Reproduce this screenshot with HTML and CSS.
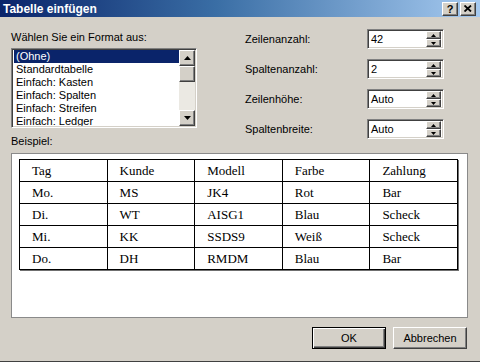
FILE: index.html
```html
<!DOCTYPE html>
<html lang="de">
  <head>
    <meta charset="UTF-8" />
    <meta name="viewport" content="width=device-width, initial-scale=1.0" />
    <title>Tabelle einfügen</title>
    <link rel="stylesheet" href="styles.css">
  </head>
  <body>
    <div class="dialog">
      <div class="titlebar">
        <span class="title">Tabelle einfügen</span>
        <div class="caption-btns">
          <div class="cap-btn help">?</div>
          <div class="cap-btn">
            <svg width="8" height="7" viewBox="0 0 8 7">
              <path d="M0.5 0.5 L7 6.5 M7 0.5 L0.5 6.5" stroke="#000" stroke-width="1.8" />
            </svg>
          </div>
        </div>
      </div>

      <div class="content">
        <div class="top">
          <div class="format">
            <div class="label">Wählen Sie ein Format aus:</div>
            <div class="listbox sunken">
              <ul class="items">
                <li class="selected">(Ohne)</li>
                <li>Standardtabelle</li>
                <li>Einfach: Kasten</li>
                <li>Einfach: Spalten</li>
                <li>Einfach: Streifen</li>
                <li>Einfach: Ledger</li>
              </ul>
              <div class="scrollbar">
                <div class="sb-btn raised">
                  <svg width="7" height="4" viewBox="0 0 7 4"><polygon points="3.5,0 7,4 0,4" fill="#000" /></svg>
                </div>
                <div class="sb-thumb raised"></div>
                <div class="sb-track"></div>
                <div class="sb-btn raised">
                  <svg width="7" height="4" viewBox="0 0 7 4"><polygon points="0,0 7,0 3.5,4" fill="#000" /></svg>
                </div>
              </div>
            </div>
            <div class="label example-label">Beispiel:</div>
          </div>

          <div class="fields">
            <span class="field-label">Zeilenanzahl:</span>
            <div class="spin sunken">
              <span class="spin-value">42</span>
              <div class="spin-btns">
                <div class="spin-btn raised"><svg width="5" height="3" viewBox="0 0 5 3"><polygon points="2.5,0 5,3 0,3" fill="#000" /></svg></div>
                <div class="spin-btn raised"><svg width="5" height="3" viewBox="0 0 5 3"><polygon points="0,0 5,0 2.5,3" fill="#000" /></svg></div>
              </div>
            </div>

            <span class="field-label">Spaltenanzahl:</span>
            <div class="spin sunken">
              <span class="spin-value">2</span>
              <div class="spin-btns">
                <div class="spin-btn raised"><svg width="5" height="3" viewBox="0 0 5 3"><polygon points="2.5,0 5,3 0,3" fill="#000" /></svg></div>
                <div class="spin-btn raised"><svg width="5" height="3" viewBox="0 0 5 3"><polygon points="0,0 5,0 2.5,3" fill="#000" /></svg></div>
              </div>
            </div>

            <span class="field-label">Zeilenhöhe:</span>
            <div class="spin sunken">
              <span class="spin-value">Auto</span>
              <div class="spin-btns">
                <div class="spin-btn raised"><svg width="5" height="3" viewBox="0 0 5 3"><polygon points="2.5,0 5,3 0,3" fill="#000" /></svg></div>
                <div class="spin-btn raised"><svg width="5" height="3" viewBox="0 0 5 3"><polygon points="0,0 5,0 2.5,3" fill="#000" /></svg></div>
              </div>
            </div>

            <span class="field-label">Spaltenbreite:</span>
            <div class="spin sunken">
              <span class="spin-value">Auto</span>
              <div class="spin-btns">
                <div class="spin-btn raised"><svg width="5" height="3" viewBox="0 0 5 3"><polygon points="2.5,0 5,3 0,3" fill="#000" /></svg></div>
                <div class="spin-btn raised"><svg width="5" height="3" viewBox="0 0 5 3"><polygon points="0,0 5,0 2.5,3" fill="#000" /></svg></div>
              </div>
            </div>
          </div>
        </div>

        <div class="preview">
          <table class="sample">
            <tr><td>Tag</td><td>Kunde</td><td>Modell</td><td>Farbe</td><td>Zahlung</td></tr>
            <tr><td>Mo.</td><td>MS</td><td>JK4</td><td>Rot</td><td>Bar</td></tr>
            <tr><td>Di.</td><td>WT</td><td>AISG1</td><td>Blau</td><td>Scheck</td></tr>
            <tr><td>Mi.</td><td>KK</td><td>SSDS9</td><td>Weiß</td><td>Scheck</td></tr>
            <tr><td>Do.</td><td>DH</td><td>RMDM</td><td>Blau</td><td>Bar</td></tr>
          </table>
        </div>

        <div class="footer">
          <div class="btn default">OK</div>
          <div class="btn raised">Abbrechen</div>
        </div>
      </div>
    </div>
  </body>
</html>
```

FILE: styles.css
```css
body {
  margin: 0;
  background-color: #d4d0c8;
  font-family: "Liberation Sans", Arial, sans-serif;
  font-size: 11px;
  color: #000;
}

.dialog {
  width: 480px;
  height: 362px;
  box-sizing: border-box;
  border-bottom: 1px solid #404040;
  overflow: hidden;
}

.titlebar {
  height: 17px;
  display: flex;
  align-items: center;
  justify-content: space-between;
  padding: 0 4px 0 3px;
  background: linear-gradient(to right, #0a246a 0%, #3a6ea5 45%, #a6caf0 100%);
}

.title {
  color: #fff;
  font-weight: bold;
  font-size: 12px;
}

.caption-btns {
  display: flex;
  gap: 2px;
}

.cap-btn {
  width: 14px;
  height: 12px;
  display: flex;
  align-items: center;
  justify-content: center;
  background-color: #d4d0c8;
  border: 1px solid;
  border-color: #fff #404040 #404040 #fff;
  box-shadow: inset -1px -1px #808080;
  font-weight: bold;
  font-size: 11px;
  line-height: 12px;
}

.raised {
  background-color: #d4d0c8;
  border: 1px solid;
  border-color: #fff #404040 #404040 #fff;
  box-shadow: inset -1px -1px #808080;
  box-sizing: border-box;
}

.sunken {
  background-color: #fff;
  border: 1px solid;
  border-color: #808080 #fff #fff #808080;
  box-shadow: inset 1px 1px #404040, inset -1px -1px #d4d0c8;
  box-sizing: border-box;
}

.content {
  padding: 0 12px 0 11px;
}

.top {
  display: flex;
  align-items: flex-start;
}

.label {
  line-height: 13px;
}

.format {
  width: 186px;
  margin-top: 14px;
}

.format .label {
  margin-bottom: 4px;
}

.listbox {
  height: 80px;
  display: flex;
  padding: 1px;
  overflow: hidden;
}

.items {
  list-style: none;
  margin: 0;
  padding: 0 0 0 1px;
  flex: 1;
  overflow: hidden;
}

.items li {
  height: 13px;
  line-height: 13px;
  padding-left: 2px;
  white-space: nowrap;
}

.items li.selected {
  background-color: #0a246a;
  color: #fff;
}

.scrollbar {
  width: 16px;
  display: flex;
  flex-direction: column;
}

.sb-btn {
  height: 16px;
  display: flex;
  align-items: center;
  justify-content: center;
}

.sb-thumb {
  height: 16px;
}

.sb-track {
  flex: 1;
  background-color: #ebe9e3;
}

.format .example-label {
  margin-top: 7px;
  margin-bottom: 0;
}

.fields {
  margin-left: 48px;
  margin-top: 12px;
  display: grid;
  grid-template-columns: 122px 77px;
  grid-auto-rows: 20px;
  row-gap: 10px;
  align-items: center;
}

.spin {
  height: 20px;
  display: flex;
  align-items: center;
  padding: 2px;
}

.spin-value {
  flex: 1;
  padding-left: 1px;
}

.spin-btns {
  width: 15px;
  height: 16px;
  display: flex;
  flex-direction: column;
}

.spin-btn {
  flex: 1;
  display: flex;
  align-items: center;
  justify-content: center;
}

.preview {
  height: 165px;
  margin-top: 5px;
  box-sizing: border-box;
  background-color: #fff;
  border: 1px solid #8a8a8a;
  padding: 5px 0 0 7px;
}

.sample {
  width: 439px;
  border-collapse: collapse;
  table-layout: fixed;
  border: 1px solid #000;
  box-shadow: 1px 1px 0 #707070;
  font-family: "Liberation Serif", "Times New Roman", serif;
  font-size: 13px;
}

.sample td {
  border: 1px solid #000;
  height: 21px;
  padding: 0 0 0 12px;
  white-space: nowrap;
}

.footer {
  display: flex;
  justify-content: flex-end;
  gap: 7px;
  margin-top: 9px;
  margin-right: 1px;
}

.btn {
  width: 74px;
  height: 22px;
  display: flex;
  align-items: center;
  justify-content: center;
  box-sizing: border-box;
}

.btn.default {
  background-color: #d4d0c8;
  border: 1px solid #000;
  box-shadow: inset 1px 1px #fff, inset -1px -1px #404040, inset -2px -2px #808080;
}
```
